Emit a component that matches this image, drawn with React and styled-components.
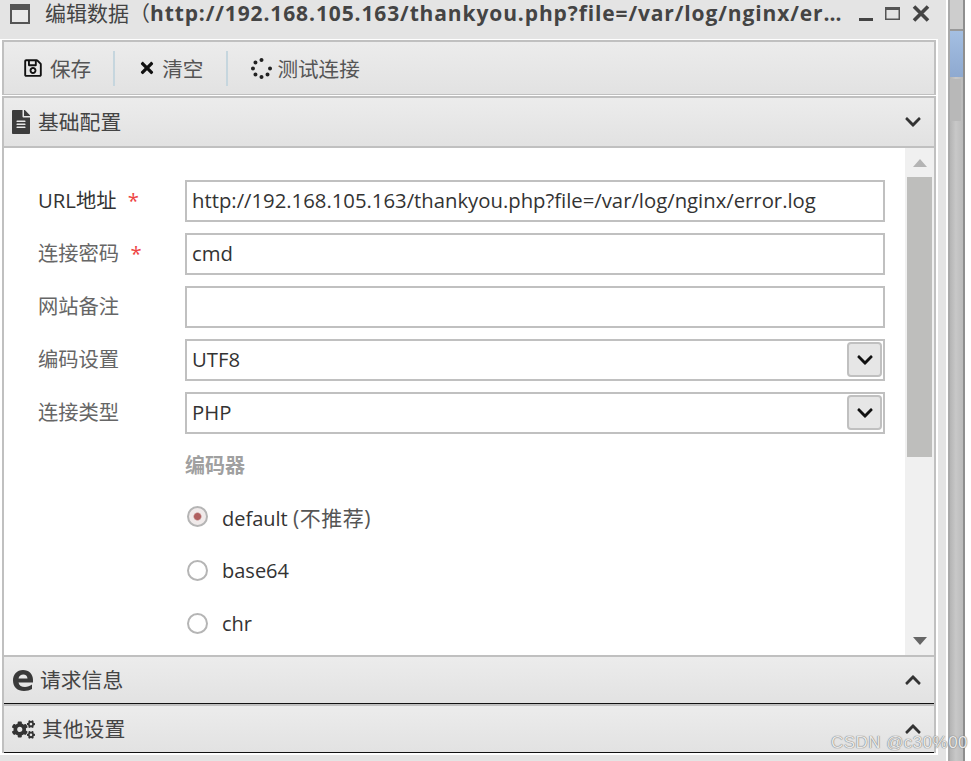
import React from 'react';
import styled, { createGlobalStyle } from 'styled-components';
import { FaRegSave, FaTimes, FaSpinner, FaFileAlt, FaChevronDown, FaChevronUp, FaCogs } from 'react-icons/fa';

const Global = createGlobalStyle`
  html, body { margin: 0; padding: 0; background: #fff; overflow: hidden; }
  * { box-sizing: border-box; }
`;
const FONT = `"Open Sans", "Noto Sans CJK SC", sans-serif`;

const Page = styled.div`
  position: relative; width: 971px; height: 761px; display: flex; font-family: ${FONT}; color: #333; overflow: hidden; background: #fff;
`;
const Win = styled.div`
  width: 946px; height: 761px; background: #e4e4e4; display: flex; flex-direction: column;
`;
const TitleBar = styled.div`
  height: 39px; flex: none; display: flex; align-items: flex-start; padding: 3px 16px 0 9px; gap: 14px;
  background: #e4e4e4;
`;
const TitleText = styled.div`
  flex: 1; min-width: 0; font-size: 21px; line-height: 26px; letter-spacing: .88px; color: #444; font-weight: 700; white-space: nowrap; overflow: hidden; text-overflow: ellipsis; margin-top: -3px;
  span { font-weight: 400; letter-spacing: 0; }
`;
const WinTools = styled.div`
  display: flex; align-items: center; gap: 11px; margin-top: 2px; margin-left: 1px; color: #444;
`;
const Frame = styled.div`
  width: 938px; flex: none; background: #fff; padding: 1px 2px 2px; display: flex; flex-direction: column; gap: 1px;
`;
const Toolbar = styled.div`
  height: 55px; border: 2px solid #c0c0c0; border-bottom-width: 1px; background: linear-gradient(#ececec, #e2e2e2); display: flex; align-items: center; padding-left: 10px;
`;
const ToolBtn = styled.div`
  display: flex; align-items: center; gap: ${p => p.$gap}px; height: 35px; padding: 0 ${p => p.$pr}px 0 ${p => p.$pl}px; font-size: 20.6px; color: #555;
  border-right: ${p => (p.$sep ? '2px solid #c6d6de' : 'none')};
`;
const Section = styled.div`
  display: flex; flex-direction: column; background: #fff; border-left: 2px solid #c0c0c0; border-right: 2px solid #c0c0c0;
`;
const Header = styled.div`
  height: ${p => p.$h}px; display: flex; align-items: center; padding: 0 12px 0 ${p => p.$pl}px; gap: ${p => p.$gap}px;
  background: linear-gradient(#ececec, #e2e2e2); font-size: 20.8px; color: #444;
  border-top: 2px solid #c0c0c0; border-bottom: ${p => p.$bb};
  span { flex: 1; margin-top: -2px; }
`;
const Body = styled.div`
  height: 507px; display: flex; overflow: hidden; background: #fff;
`;
const Form = styled.div`
  flex: 1; padding: 32px 20px 0 34px; display: flex; flex-direction: column;
`;
const Row = styled.div`
  display: flex; height: 42px; margin-bottom: 11px; font-size: 20.3px;
`;
const Label = styled.div`
  width: 147px; flex: none; line-height: 41px; color: ${p => p.$dark ? '#333' : '#666'};
  em { font-style: normal; color: #e44; margin-left: 6px; }
`;
const Input = styled.div`
  flex: 1; height: 42px; border: 2px solid #c0c0c0; background: #fff; line-height: 36px; padding-left: 5px; color: #333; position: relative;
`;
const SelBtn = styled.div`
  position: absolute; right: 1px; top: 1px; width: 35px; height: 35px; background: #e6e6e6; border: 2px solid #c0c0c0; border-radius: 4px;
  display: flex; align-items: center; justify-content: center; color: #111;
`;
const Group = styled.div`
  margin-left: 147px; font-size: 20px; font-weight: 700; color: #a0a0a0; line-height: 26px; margin-top: 8px; margin-bottom: 11px;
`;
const Radios = styled.div`
  margin-left: 149px; display: flex; flex-direction: column;
`;
const RadioRow = styled.div`
  height: 53.4px; display: flex; align-items: center; font-size: 20px; gap: 14px; color: #333;
  small { font-size: 21px; letter-spacing: .5px; color: #555; }
`;
const Dot = styled.div`
  width: 21px; height: 21px; border-radius: 50%; border: 2px solid #b5b5b5; background: ${p => p.$on ? 'radial-gradient(circle, #b06060 0 3px, #f0eaea 4.5px)' : '#fff'};
`;
const VBar = styled.div`
  width: 29px; flex: none; background: #f0f0f0; display: flex; flex-direction: column; align-items: center;
`;
const Arrow = styled.div`
  height: 29px; flex: none; display: flex; align-items: center; justify-content: center;
`;
const Thumb = styled.div`
  width: 25px; height: 280px; flex: none; background: #bebebc;
`;
const Spacer = styled.div`
  flex: 1;
`;
const Strip = styled.div`
  width: 17px; margin-left: 2px; height: 761px; border-left: 2px solid #aaa; border-right: 2px solid #8e8e8e; background: linear-gradient(90deg, #b4b4b4, #c8c8c8 45%, #bbb);
  display: flex; flex-direction: column;
`;
const StripTop = styled.div`
  height: 31px; flex: none; background: #cdcdcd; border-bottom: 2px solid #999;
`;
const StripBlue = styled.div`
  height: 46px; flex: none; background: linear-gradient(#a4bfe2, #8ea9d0); width: 100%;
`;
const StripGray = styled.div`
  height: 42px; width: 11px; flex: none; margin-top: 2px; background: #b8b8b8;
`;
const Mark = styled.div`
  position: absolute; left: 831px; top: 733px; font-family: "Liberation Sans", sans-serif; font-size: 17px; line-height: 20px; color: #e8e8e8; letter-spacing: .45px;
  text-shadow: 0 0 1px #777, 0 0 1px #777; white-space: nowrap;
`;

const Tri = ({ up, color }) => (
  <svg width="14" height="8" viewBox="0 0 14 8"><path d={up ? 'M7 0 14 8H0Z' : 'M0 0H14L7 8Z'} fill={color} /></svg>
);
const EdgeE = () => (
  <svg width="20" height="22" viewBox="0 0 20 22">
    <path fillRule="evenodd" fill="#3a3a3a" d="M10 1C4 1 0 5.5 0 11.5 0 18 4.5 22 11 22c3 0 6-.8 8-2v-4.5c-2 1.6-4.5 2.5-7 2.5-3.5 0-6-1.5-6.5-4.5H20v-2.5C20 5 16 1 10 1ZM5.5 9.5C6 7 8 5.5 10.3 5.5c2.5 0 4 1.5 4.2 4Z" />
  </svg>
);

export default function App() {
  return (
    <Page>
      <Global />
      <Win>
        <TitleBar>
          <svg width="22" height="22" viewBox="0 0 22 22" style={{ flex: 'none' }}><rect x="1" y="1" width="20" height="20" fill="#555" /><rect x="3" y="7" width="16" height="12" fill="#e8e8e8" /></svg>
          <TitleText><span>编辑数据（</span>http://192.168.105.163/thankyou.php?file=/var/log/nginx/error.log）</TitleText>
          <WinTools>
            <svg width="14" height="16" viewBox="0 0 14 16"><rect x="0" y="12" width="14" height="3" fill="#444" /></svg>
            <svg width="17" height="15" viewBox="0 0 17 15"><path d="M1 1H16V14H1ZM2.5 4V12.5H14.5V4Z" fill="#555" fillRule="evenodd" /></svg>
            <svg width="18" height="17" viewBox="0 0 18 17"><path d="M2 1.5 16 15.5M16 1.5 2 15.5" stroke="#444" strokeWidth="3.6" /></svg>
          </WinTools>
        </TitleBar>
        <Frame>
          <Toolbar>
            <ToolBtn $pl={9} $pr={22} $gap={7} $sep><FaRegSave size={20} color="#111" />保存</ToolBtn>
            <ToolBtn $pl={23} $pr={23} $gap={6} $sep><FaTimes size={18} color="#111" />清空</ToolBtn>
            <ToolBtn $pl={23} $pr={0} $gap={5}><FaSpinner size={21} color="#222" />测试连接</ToolBtn>
          </Toolbar>
          <Section>
            <Header $h={52} $pl={5} $gap={5} $bb="2px solid #c0c0c0"><FaFileAlt size={24} color="#3c3c3c" /><span>基础配置</span><FaChevronDown size={18} color="#333" /></Header>
            <Body>
              <Form>
                <Row><Label $dark>URL地址<em> *</em></Label><Input>http://192.168.105.163/thankyou.php?file=/var/log/nginx/error.log</Input></Row>
                <Row><Label>连接密码<em> *</em></Label><Input>cmd</Input></Row>
                <Row><Label>网站备注</Label><Input /></Row>
                <Row><Label>编码设置</Label><Input>UTF8<SelBtn><FaChevronDown size={18} /></SelBtn></Input></Row>
                <Row><Label>连接类型</Label><Input>PHP<SelBtn><FaChevronDown size={18} /></SelBtn></Input></Row>
                <Group>编码器</Group>
                <Radios>
                  <RadioRow><Dot $on /><div>default <small>(不推荐)</small></div></RadioRow>
                  <RadioRow><Dot />base64</RadioRow>
                  <RadioRow><Dot />chr</RadioRow>
                </Radios>
              </Form>
              <VBar>
                <Arrow><Tri up color="#b4b4b4" /></Arrow>
                <Thumb />
                <Spacer />
                <Arrow><Tri color="#666" /></Arrow>
              </VBar>
            </Body>
            <Header $h={49} $pl={9} $gap={7} $bb="1px solid #111"><EdgeE /><span>请求信息</span><FaChevronUp size={18} color="#333" /></Header>
            <Header $h={49} $pl={8} $gap={7} $bb="1px solid #111"><FaCogs size={23} color="#333" /><span>其他设置</span><FaChevronUp size={18} color="#333" /></Header>
          </Section>
        </Frame>
      </Win>
      <Strip>
        <StripTop />
        <StripBlue />
        <StripGray />
      </Strip>
      <Mark>CSDN @c30%00</Mark>
    </Page>
  );
}
